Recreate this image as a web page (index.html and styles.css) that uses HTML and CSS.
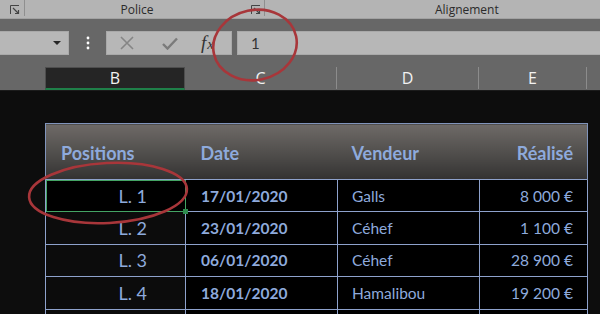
FILE: index.html
```html
<html>
<head>
<link rel="stylesheet" href="styles.css">
<title>Positions</title>
</head>
<body>
<div class="ribbon">
  <div class="group first">
    <svg class="launcher" width="10" height="10" viewBox="0 0 10 10"><path d="M0.5 9V0.5H9" fill="none" stroke="#444" stroke-width="1"/><path d="M3 3L8.5 8.5M5 8.5H8.5V5" fill="none" stroke="#444" stroke-width="1.2"/></svg>
  </div>
  <div class="group police">
    <span class="label">Police</span>
    <svg class="launcher" width="10" height="10" viewBox="0 0 10 10"><path d="M0.5 9V0.5H9" fill="none" stroke="#444" stroke-width="1"/><path d="M3 3L8.5 8.5M5 8.5H8.5V5" fill="none" stroke="#444" stroke-width="1.2"/></svg>
  </div>
  <div class="group align">
    <span class="label">Alignement</span>
  </div>
</div>

<div class="toolbar">
  <div class="formula-bar">
    <div class="name-box">
      <svg width="8" height="4" viewBox="0 0 8 4"><path d="M0 0H8L4 4Z" fill="#262626"/></svg>
    </div>
    <div class="dots">
      <svg width="4" height="14" viewBox="0 0 4 14"><circle cx="2" cy="2" r="1.4" fill="#fff"/><circle cx="2" cy="7" r="1.4" fill="#fff"/><circle cx="2" cy="12" r="1.4" fill="#fff"/></svg>
    </div>
    <div class="fx-buttons">
      <svg class="btn-x" width="14" height="14" viewBox="0 0 14 14"><path d="M1 1L13 13M13 1L1 13" stroke="#858585" stroke-width="1.6"/></svg>
      <svg class="btn-ok" width="16" height="13" viewBox="0 0 16 13"><path d="M1 7L5.5 11.5L15 1.5" fill="none" stroke="#7b7b7b" stroke-width="2.4"/></svg>
      <span class="fx">f<small>x</small></span>
    </div>
    <div class="formula-input">1</div>
  </div>
  <div class="col-heads">
    <div class="col col-a"></div>
    <div class="col col-b active">B</div>
    <div class="col col-c">C</div>
    <div class="col col-d">D</div>
    <div class="col col-e">E</div>
    <div class="col col-f"></div>
  </div>
</div>

<div class="sheet">
  <table class="sales">
    <colgroup>
      <col class="w-pos"><col class="w-date"><col class="w-seller"><col class="w-amount">
    </colgroup>
    <tr class="head">
      <th class="pos">Positions</th>
      <th class="date">Date</th>
      <th class="seller">Vendeur</th>
      <th class="amount">Réalisé</th>
    </tr>
    <tr>
      <td class="pos selected">L. 1<span class="handle"></span></td>
      <td class="date">17/01/2020</td>
      <td class="seller">Galls</td>
      <td class="amount">8 000 €</td>
    </tr>
    <tr>
      <td class="pos">L. 2</td>
      <td class="date">23/01/2020</td>
      <td class="seller">Céhef</td>
      <td class="amount">1 100 €</td>
    </tr>
    <tr>
      <td class="pos">L. 3</td>
      <td class="date">06/01/2020</td>
      <td class="seller">Céhef</td>
      <td class="amount">28 900 €</td>
    </tr>
    <tr>
      <td class="pos">L. 4</td>
      <td class="date">18/01/2020</td>
      <td class="seller">Hamalibou</td>
      <td class="amount">19 200 €</td>
    </tr>
    <tr>
      <td class="pos"></td>
      <td class="date"></td>
      <td class="seller"></td>
      <td class="amount"></td>
    </tr>
  </table>
</div>

<svg class="marks" width="600" height="314" viewBox="0 0 600 314">
  <ellipse cx="255" cy="45" rx="42" ry="35" transform="rotate(-12 255 45)" fill="none" stroke="#a8363a" stroke-width="2.6"/>
  <ellipse cx="108" cy="193" rx="79" ry="30" transform="rotate(-3 108 193)" fill="none" stroke="#a8363a" stroke-width="2.6"/>
</svg>
</body>
</html>
```

FILE: styles.css
```css
body {
    margin: 0;
    width: 600px;
    height: 314px;
    overflow: hidden;
    background-color: #0d0d0d;
    font-family: "Open Sans", "Noto Sans", sans-serif;
    position: relative;
}

/* ribbon group labels */
.ribbon {
    display: flex;
    height: 19px;
    background-color: #b4b4b4;
    border-bottom: 1px solid #a2a2a2;
    box-sizing: border-box;
}
.group {
    display: flex;
    align-items: center;
    border-right: 1px solid #8f8f8f;
    height: 16px;
    box-sizing: border-box;
}
.group.first {
    width: 25px;
    padding-left: 10px;
    box-sizing: border-box;
}
.group.police {
    width: 240px;
}
.group.align {
    flex: 1;
    border-right: none;
}
.label {
    font-size: 12px;
    color: #2b2b2b;
    line-height: 16px;
    padding-top: 3px;
}
.police .label {
    flex: 1;
    text-align: center;
    padding-right: 2px;
}
.police .launcher {
    margin-right: 3px;
    margin-top: 4px;
}
.first .launcher {
    margin-top: 4px;
}
.align .label {
    padding-left: 170px;
}

/* formula bar */
.toolbar {
    background-color: #676767;
    padding-top: 12px;
}
.formula-bar {
    display: flex;
    height: 24px;
}
.name-box {
    width: 69px;
    background-color: #b7b7b7;
    border: 1px solid #a9a9a9;
    border-left: none;
    box-sizing: border-box;
    display: flex;
    align-items: center;
    justify-content: flex-end;
    padding-right: 7px;
}
.dots {
    width: 37px;
    display: flex;
    align-items: center;
    justify-content: center;
}
.fx-buttons {
    width: 126px;
    background-color: #b7b7b7;
    border: 1px solid #a9a9a9;
    box-sizing: border-box;
    display: flex;
    align-items: center;
}
.btn-x {
    margin-left: 13px;
}
.btn-ok {
    margin-left: 28px;
}
.fx {
    margin-left: 23px;
    font-family: "Liberation Serif", serif;
    font-style: italic;
    font-size: 19px;
    color: #333;
    white-space: nowrap;
    line-height: 20px;
}
.fx small {
    font-size: 15px;
    margin-left: 1px;
}
.formula-input {
    flex: 1;
    margin-left: 5px;
    background-color: #b7b7b7;
    border: 1px solid #a9a9a9;
    border-right: none;
    box-sizing: border-box;
    font-family: "Lato", sans-serif;
    font-size: 15px;
    color: #333;
    line-height: 22px;
    padding-left: 13px;
}

/* column headers */
.col-heads {
    display: flex;
    margin-top: 12px;
    height: 23px;
    border-bottom: 1px solid #1b1b1b;
}
.col {
    height: 22px;
    box-sizing: border-box;
    border-right: 1px solid #8c8c8c;
    color: #f2f2f2;
    font-size: 16px;
    line-height: 22px;
    text-align: center;
}
.col-a { width: 45px; border-right: none; }
.col-b { width: 140px; }
.col-c { width: 152px; }
.col-d { width: 142px; }
.col-e { width: 108px; }
.col-f { flex: 1; border-right: none; }
.col.active {
    background-color: #252525;
    border: 1px solid #4e4e4e;
    border-bottom: 2px solid #1f8049;
    height: 23px;
    line-height: 20px;
}

/* sheet */
.sheet {
    padding: 32px 0 0 45px;
}
.sales {
    border-collapse: collapse;
    table-layout: fixed;
    width: 542px;
    font-family: "Lato", sans-serif;
    color: #8eaadc;
    white-space: nowrap;
}
.w-pos { width: 140px; }
.w-date { width: 152px; }
.w-seller { width: 142px; }
.w-amount { width: 108px; }
.sales th {
    height: 56px;
    font-size: 18px;
    font-weight: bold;
    text-align: left;
    background: linear-gradient(#6e6a67, #4c4a48 60%, #333232);
    border-top: 1px solid #8094bb;
    padding: 2px 0 0 0;
}
.sales th:first-child { border-left: 1px solid #8094bb; }
.sales th:last-child { border-right: 1px solid #8094bb; }
.sales td {
    height: 32.4px;
    padding: 0;
    border: 1px solid #8ea2cc;
    background-color: #000;
    font-size: 15.5px;
}
.sales .date { padding-left: 15px; }
.sales .seller { padding-left: 14px; }
.sales .amount { text-align: right; padding-right: 14px; }
.sales th.pos { padding-left: 15px; }
.sales td.pos {
    text-align: right;
    padding-right: 38px;
    font-size: 18px;
    background-color: #0c0c0c;
}
.sales td.date { font-weight: bold; }
.sales td.selected {
    background-color: #000;
    position: relative;
    outline: 1px solid #44a464;
    outline-offset: -1px;
}
.handle {
    position: absolute;
    right: -3px;
    bottom: -3px;
    width: 5px;
    height: 5px;
    background-color: #2e8b4e;
    z-index: 1;
}

.marks {
    position: absolute;
    left: 0;
    top: 0;
    pointer-events: none;
}
```
